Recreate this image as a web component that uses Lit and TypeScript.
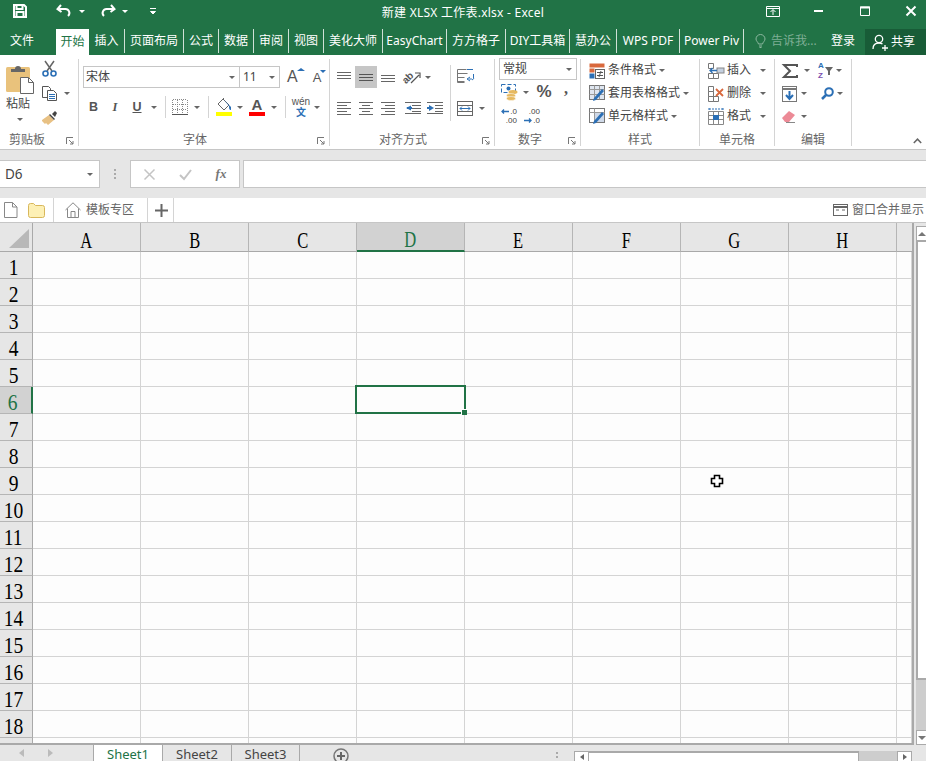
import { LitElement, html, svg, css } from "lit";
import { customElement } from "lit/decorators.js";

const i = (w: number, h: number, body: any) => html`<svg class="ic" width=${w} height=${h} viewBox="0 0 ${w} ${h}">${body}</svg>`;
const G = "#666";
const B = "#2b6fb5";
const car = html`<span class="car"></span>`;
const cell = (w: number, c: any = "") => html`<span class="cell" style="width:${w}px">${c}</span>`;
const launcher = html`<svg class="launch" width="8" height="8" viewBox="0 0 8 8"><path d="M.5 7V.5H7M3 3l4 4M7 4v3H4" fill="none" stroke="#777"/></svg>`;

const lines = (rows: [number, number][], y0: number, dy: number) =>
  rows.map((r, k) => `M${r[0]} ${y0 + k * dy + 0.5}H${r[1]}`).join("");

const save = i(14, 14, svg`<path d="M1 1h10l2 2v10H1z M3.500 1v4h6V1 M3.500 13V8h7v5" fill="none" stroke="#fff" stroke-width="2"/>`);
const undo = i(16, 14, svg`<path d="M5 1L1.500 5 5.500 8M2 5h7a4 4 0 0 1 3 7" fill="none" stroke="#fff" stroke-width="2"/>`);
const redo = i(16, 14, svg`<path d="M11 1l3.500 4L10.500 8M14 5H7a4 4 0 0 0-3 7" fill="none" stroke="#fff" stroke-width="2"/>`);
const custom = i(8, 8, svg`<path d="M1 1.500h6M1.500 4.500h5L4 7z" fill="#fff" stroke="#fff"/>`);

const paste = i(30, 30, svg`
  <rect x="0" y="3" width="24" height="25" rx="1.500" fill="#e9c27c"/>
  <path d="M5 8V5h4a3 3 0 0 1 6 0h4v3z" fill="#666"/>
  <path d="M14.500 13.500h8l5 5v11h-13z" fill="#fff" stroke="#666"/>
  <path d="M22.500 13.500v5h5" fill="none" stroke="#666"/>`);
const cut = i(16, 16, svg`
  <path d="M3 0l7 10M12 0L5 10" stroke="#666" stroke-width="1.500" fill="none"/>
  <circle cx="3.500" cy="12.500" r="2.500" fill="none" stroke="${B}" stroke-width="1.600"/>
  <circle cx="11.500" cy="12.500" r="2.500" fill="none" stroke="${B}" stroke-width="1.600"/>`);
const copy = i(16, 15, svg`
  <path d="M.5.500h6l2 2v9H.5z" fill="#fff" stroke="#555"/>
  <path d="M5.500 4.500h6l3 3v7h-9z" fill="#fff" stroke="#555"/>
  <path d="M7 8.500h6M7 10.500h6M7 12.500h6" stroke="${B}"/>`);
const brush = i(16, 15, svg`
  <path d="M0 10l7-5 5 5-6 5-2-2-1 1-3-3z" fill="#e8c184"/>
  <path d="M7 5l5 5 1-1-5-5z" fill="#444"/><path d="M10 4l3-3 2 2-2 4z" fill="#444"/>`);

const borderIc = i(16, 16, svg`<path d="M.5 1v14M5.500 1v14M10.500 1v14M15.500 1v14M1 .500h14M1 5.500h14M1 10.500h14" stroke="#888" stroke-dasharray="1 1" fill="none"/><path d="M0 15.500h16" stroke="#555"/>`);
const fillIc = html`<span class="stack">${i(16, 13, svg`
  <path d="M2 6l5-5 6 6-5 5z" fill="#fff" stroke="#666"/><path d="M5 3l3-3" stroke="#666"/>
  <path d="M7 1l6 6 2 2v3c-2 0-2-2-2-4z" fill="${B}"/>`)}<i class="swatch yellow"></i></span>`;
const colorIc = html`<span class="stack"><b class="acolor">A</b><i class="swatch red"></i></span>`;
const wen = html`<span class="wen"><span>wén</span><b>文</b></span>`;

const alignT = i(16, 12, svg`<path d="${lines([[0, 14], [0, 14], [0, 14]], 1, 3)}" stroke="${G}"/>`);
const alignM = i(16, 12, svg`<path d="${lines([[1, 15], [1, 15], [1, 15]], 3, 3)}" stroke="#555"/>`);
const alignB = i(16, 12, svg`<path d="${lines([[1, 15], [1, 15], [1, 15]], 4, 3)}" stroke="${G}"/>`);
const orient = i(20, 18, svg`
  <text x="0" y="13" transform="rotate(-45 6 10)" class="tiny">ab</text>
  <path d="M9 15L17 7M13 5h5v5" fill="none" stroke="#555" stroke-width="1.200"/>`);
const wrap = i(18, 16, svg`
  <path d="M.5.500h9M.5 4.500h10M.5 8.500h7M.5 12.500h7" stroke="#777"/><path d="M.5 .5v13h7" fill="none" stroke="#777"/>
  <path d="M10 .5h6M16.500 5v4a1 1 0 0 1-2 1h-3M13 8l-3 2 3 2" fill="none" stroke="${B}"/>`);
const hl = (a: [number, number][]) => i(15, 13, svg`<path d="${lines(a, 1, 3)}" stroke="${G}"/>`);
const left = hl([[0, 14], [0, 10], [0, 14], [0, 10], [0, 14]]);
const center = hl([[0, 14], [3, 11], [0, 14], [3, 11], [0, 14]]);
const right = hl([[0, 14], [4, 14], [0, 14], [4, 14], [0, 14]]);
const indentL = i(17, 13, svg`<path d="M0 1.500h16M7 4.500h9M7 7.500h9M7 10.500h9M0 12.500h16" stroke="${G}"/><path d="M6 4.500v5L1 7z" fill="${B}"/><path d="M2 7h5" stroke="${B}" stroke-width="2"/>`);
const indentR = i(17, 13, svg`<path d="M0 1.500h16M8 4.500h8M8 7.500h8M8 10.500h8M0 12.500h16" stroke="${G}"/><path d="M2 4v6l5-3z" fill="${B}"/><path d="M0 7h4" stroke="${B}" stroke-width="2"/>`);
const merge = i(16, 16, svg`<rect x=".5" y=".5" width="15" height="14" fill="#fff" stroke="#666"/><path d="M.5 4.500h15M.5 10.500h15" stroke="#666"/><path d="M3 7.500h10M5 5.500l-2 2 2 2M11 5.500l2 2-2 2" fill="none" stroke="${B}"/>`);
const acct = i(18, 17, svg`
  <rect x=".5" y=".5" width="14" height="8" fill="#fff" stroke="${B}" stroke-dasharray="4 2"/>
  <circle cx="7.500" cy="4.500" r="2" fill="${B}"/>
  <ellipse cx="12" cy="8" rx="4.500" ry="2" fill="#e6b961"/><ellipse cx="10" cy="11.500" rx="4.500" ry="2" fill="#e6b961" stroke="#fff" stroke-width=".5"/><ellipse cx="10" cy="14.500" rx="4.500" ry="2" fill="#e6b961" stroke="#fff" stroke-width=".5"/>`);
const decArrowL = i(8, 5, svg`<path d="M8 2.500H1M3 .5L1 2.500l2 2" fill="none" stroke="${B}" stroke-width="1.300"/>`);
const decArrowR = i(8, 5, svg`<path d="M0 2.500h7M5 .5l2 2-2 2" fill="none" stroke="${B}" stroke-width="1.300"/>`);
const decIn = html`<span class="dec"><span class="decr">${decArrowL}<span>.0</span></span><span>.00</span></span>`;
const decOut = html`<span class="dec"><span>.00</span><span class="decr">${decArrowR}<span>.0</span></span></span>`;

const condIc = i(16, 16, svg`<path d="M.5.500h15v4H.5z" fill="#d9683c"/><path d="M.5 5.500h5v4H.5z" fill="#d9683c"/><path d="M.5 10.500h5v5H.5z" fill="${B}"/><rect x="6.500" y="6.500" width="9" height="9" fill="#fff" stroke="#666"/><path d="M8 9.500h6M8 12.500h6M12 8l-2 6" stroke="#555" fill="none"/>`);
const tableIc = i(16, 17, svg`<rect x=".5" y=".5" width="15" height="14" fill="#dfe6f0" stroke="#777"/><path d="M.5 4.500h15M.5 9.500h15M5.500.5v14M10.500.5v14" stroke="#999"/><path d="M4 16l3-1 8-9-2-2-8 9z" fill="${B}"/>`);
const cellStyleIc = i(16, 17, svg`<rect x=".5" y=".5" width="15" height="14" fill="#fff" stroke="#777"/><rect x="5" y="5" width="10" height="9" fill="#cfd9e8"/><path d="M.5 4.500h15M5.500.5v14" stroke="#999"/><path d="M4 16l3-1 8-9-2-2-8 9z" fill="${B}"/>`);
const insIc = i(16, 16, svg`<path d="M.5.500h5v5h-5zM.5 10.500h5v5h-5zM5.500 10.500h5v5h-5z" fill="#fff" stroke="#777"/><rect x="9" y="5" width="7" height="5" fill="#c4d0e0" stroke="#888"/><path d="M9 7.500H2M4.500 5L2 7.500 4.500 10" fill="none" stroke="${B}" stroke-width="1.300"/>`);
const delIc = i(16, 16, svg`<path d="M.5.500h5v5h-5zM.5 10.500h5v5h-5zM5.500 10.500h5v5h-5zM.5 5.500h5v5h-5z" fill="#fff" stroke="#777"/><path d="M8 3l7 7M15 3l-7 7" stroke="#d9683c" stroke-width="1.800"/>`);
const fmtIc = i(16, 17, svg`<path d="M.5 3.500h15v13H.5zM.5 7.500h15M.5 11.500h15M5.500 3.500v13M10.500 3.500v13" fill="#fff" stroke="#888"/><rect x="5" y="7" width="6" height="5" fill="${B}"/><path d="M1 1h14M1 0v2M15 0v2" stroke="${B}" stroke-dasharray="2 1"/>`);
const sigma = i(16, 14, svg`<path d="M15 3V1H2l6 6-6 6h13v-2" fill="none" stroke="#555" stroke-width="2"/>`);
const fillDown = i(15, 16, svg`<rect x=".5" y=".5" width="14" height="15" fill="#fff" stroke="#777"/><path d="M.5 3h14" stroke="#777" stroke-width="2"/><path d="M7.500 5v8M4 9l3.500 4L11 9" fill="none" stroke="${B}" stroke-width="2"/>`);
const funnel = i(9, 9, svg`<path d="M0 1h8L5 5v4H3V5z" fill="#666"/>`);
const sortIc = html`<span class="sort"><span class="az"><b>A</b><b class="z">Z</b></span>${funnel}</span>`;
const find = i(13, 13, svg`<circle cx="8" cy="5" r="3.800" fill="#fff" stroke="${B}" stroke-width="2"/><path d="M5 8l-4 4" stroke="${B}" stroke-width="2.500"/>`);
const eraser = i(14, 13, svg`<path d="M0 8l7-7 6 4-6 7H3z" fill="#ec8a96"/><path d="M4 12.500h9" stroke="#888"/>`);

const docIc = i(14, 16, svg`<path d="M.5.500h8l4.500 4.500v10.500H.5z M8.500.500v4.500H13" fill="#fff" stroke="#888"/>`);
const folderIc = i(17, 15, svg`<path d="M.5 2.500a2 2 0 0 1 2-2h3l2 2h7a2 2 0 0 1 2 2v8a2 2 0 0 1-2 2h-12a2 2 0 0 1-2-2z" fill="#fdf0b5" stroke="#d8b75b"/>`);
const homeIc = i(16, 16, svg`<path d="M.5 8L8 .8 15.500 8M2.500 6.500v9h11v-9M6 15.500v-6h4v6" fill="none" stroke="#888"/>`);
const plusIc = i(13, 13, svg`<path d="M6.500 0v13M0 6.500h13" stroke="#666" stroke-width="2"/>`);
const winIc = i(15, 12, svg`<rect x=".5" y=".5" width="14" height="11" fill="none" stroke="#666"/><path d="M.5 3h14" stroke="#666" stroke-width="2"/><path d="M3 6h3M9 6h3" stroke="#666" stroke-width="1"/>`);

const bulb = i(11, 14, svg`<path d="M3.500 10C3 8 1 7 1 5a4.500 4.500 0 0 1 9 0c0 2-2 3-2.500 5zM4 12h3M4.500 13.500h2" fill="none" stroke="#8db8a0"/>`);
const person = i(17, 17, svg`<circle cx="7" cy="5" r="3.700" fill="none" stroke="#fff" stroke-width="1.300"/><path d="M1 15c0-4 2.500-6 6-6 1.500 0 2.500.3 3.500 1M13 11v6M10 14h6" fill="none" stroke="#fff" stroke-width="1.300"/>`);

const tabs: [string, number][] = [
  ["插入", 36], ["页面布局", 59], ["公式", 35], ["数据", 35], ["审阅", 35], ["视图", 35], ["美化大师", 59],
  ["EasyChart", 64], ["方方格子", 59], ["DIY工具箱", 64], ["慧办公", 47], ["WPS PDF", 63], ["Power Piv", 64],
];
const COLS = ["A", "B", "C", "D", "E", "F", "G", "H"];
const ROWS = Array.from({ length: 18 }, (_, k) => k + 1);

@customElement("app-root")
export class AppRoot extends LitElement {
  static styles = css`
    :host { display: block; width: 926px; height: 761px; overflow: hidden; background: #e6e6e6; color: #444;
      font: 12px/1.2 "Noto Sans", "Noto Sans CJK SC", sans-serif; }
    .ic { display: block; flex: none; overflow: visible; }
    .tiny { font: 10px "Liberation Sans", sans-serif; fill: #555; font-weight: bold; }
    .cell { display: flex; align-items: center; justify-content: center; flex: none; height: 100%; }
    .car { display: block; width: 0; height: 0; border: 3px solid transparent; border-top: 3px solid #666; border-bottom: 0; flex: none; }

    .title { height: 27px; background: #217346; color: #fff; display: grid; grid-template-columns: 1fr auto 1fr; align-items: center; }
    .qat { display: flex; align-items: center; height: 22px; align-self: start; }
    .qat .car { border-top-color: #fff; }
    .name { font-size: 12px; letter-spacing: .25px; }
    .win { display: flex; justify-content: flex-end; align-items: center; height: 22px; align-self: start; }

    .tabs { height: 28px; background: #217346; color: #fff; display: flex; align-items: center; }
    .tab { height: 24px; display: flex; align-items: center; justify-content: center; border-right: 1px solid #cfe0d6; box-sizing: border-box; white-space: nowrap; overflow: hidden; flex: none; padding: 0 4px; }
    .tab.file { width: 56px; border: 0; justify-content: flex-start; padding: 0 0 0 10px; }
    .tab.on { width: 33px; height: 26px; align-self: flex-end; background: #fff; color: #217346; border: 0; padding: 0; }
    .tab span { display: block; }
    .tell { display: flex; align-items: center; gap: 5px; margin-left: 11px; width: 76px; color: #7fae95; flex: none; }
    .tab.login { width: 34px; flex: none; border: 0; padding: 0; justify-content: flex-start; }
    .share { width: 61px; height: 26px; align-self: flex-end; background: #185c37; display: flex; align-items: center; gap: 2px; padding-left: 7px; box-sizing: border-box; flex: none; margin-top: -2px; }

    .ribbon { background: #fff; border-bottom: 1px solid #c6c6c6; display: flex; padding-top: 4px; box-sizing: border-box; height: 95px; padding-bottom: 3px; }
    .grp { height: 87px; border-right: 1px solid #d4d4d4; box-sizing: border-box; display: flex; flex-direction: column; flex: none; position: relative; color: #444; }
    .body { flex: 1; display: flex; min-height: 0; }
    .label { height: 15px; text-align: center; color: #666; line-height: 18px; }
    .launch { position: absolute; right: 4px; bottom: 1px; }

    .g1 { width: 79px; }
    .g1 .label { padding-right: 24px; }
    .pastecol { width: 42px; display: flex; flex-direction: column; align-items: center; padding-top: 5px; box-sizing: border-box; }
    .pastecol .big { align-self: flex-start; margin-left: 6px; }
    .pastecol .t { margin-top: 3px; font-size: 12px; margin-right: 6px; }
    .pastecol .car { margin: 7px 3px 0 0; }
    .clipcol { display: flex; flex-direction: column; padding-top: 2px; gap: 8px; }
    .clipcol .r { display: flex; align-items: center; gap: 6px; height: 16px; }

    .g2 { width: 251px; }
    .g2 .label { padding-right: 18px; }
    .col { display: flex; flex-direction: column; }
    .fontcol { padding: 7px 0 0 4px; gap: 8px; }
    .r1 { height: 22px; display: flex; align-items: center; }
    .r2 { height: 22px; display: flex; align-items: center; }
    .combo { border: 1px solid #c6c6c6; height: 22px; box-sizing: border-box; display: flex; align-items: center; justify-content: space-between; padding: 0 4px 0 2px; font-size: 12px; color: #444; flex: none; }
    .combo.font { width: 157px; }
    .combo.size { width: 40px; margin-left: 0; padding-left: 3px; border-left: 0; }
    .big-a { font: 16px "Liberation Sans", sans-serif; color: #555; position: relative; }
    .small-a { font: 13px "Liberation Sans", sans-serif; color: #555; position: relative; }
    .tri { display: inline-block; width: 0; height: 0; border: 3px solid transparent; vertical-align: top; margin-left: -1px; }
    .tri.up { border-bottom: 3px solid #2b6fb5; border-top: 0; }
    .tri.down { border-top: 3px solid #2b6fb5; border-bottom: 0; }
    .sz { display: flex; align-items: flex-start; }
    .bt { font: bold 12.5px "Liberation Sans", sans-serif; color: #555; }
    .bi { font: italic bold 12.5px "Liberation Serif", serif; color: #555; }
    .bu { font: bold 12.5px "Liberation Sans", sans-serif; text-decoration: underline; color: #555; }
    .vsep { width: 1px; height: 22px; background: #d4d4d4; flex: none; display: block; }
    .stack { display: flex; flex-direction: column; align-items: center; }
    .swatch { display: block; width: 16px; height: 4px; margin-top: 1px; }
    .yellow { background: #ffff00; }
    .red { background: #ff0000; }
    .acolor { font: bold 15px/13px "Liberation Sans", sans-serif; color: #555; }
    .wen { display: flex; flex-direction: column; align-items: center; font: 10px/10px "Liberation Sans", sans-serif; color: #555; }
    .wen b { font: bold 10px/10px "Noto Sans CJK SC", sans-serif; color: #2b6fb5; }

    .g3 { width: 165px; padding-left: 4px; }
    .g3 .label { padding-right: 22px; }
    .aligncol { padding-top: 7px; gap: 8px; width: 116px; flex: none; }
    .boxon { background: #c6c6c6; width: 22px; height: 22px; }
    .alignsep { width: 1px; height: 56px; background: #d4d4d4; margin: 6px 6px 0 0; flex: none; }
    .wrapcol { padding-top: 9px; gap: 15px; }
    .wrapcol .r { display: flex; align-items: center; height: 17px; }

    .g4 { width: 86px; padding-left: 4px; }
    .g4 .label { padding-right: 19px; }
    .numcol { gap: 0; }
    .combo.num { width: 78px; padding-left: 3px; margin-top: -1px; padding-top: 1px; }
    .r3 { height: 24px; display: flex; align-items: center; }
    .pct { font: bold 17px "Liberation Sans", sans-serif; color: #555; }
    .comma { font: bold 16px "Liberation Serif", serif; color: #555; margin-top: -6px; }
    .dec { display: flex; flex-direction: column; font: 8px/9.5px "Liberation Sans", sans-serif; color: #444; align-items: flex-end; }
    .decr { display: flex; align-items: center; gap: 1px; }

    .g5 { width: 119px; padding-left: 8px; }
    .g6 { width: 75px; padding-left: 8px; }
    .g7 { width: 77px; padding-left: 7px; }
    .g5 .label, .g6 .label { margin-left: -8px; }
    .g7 .label { margin-left: -7px; }
    .rows { display: flex; flex-direction: column; width: 100%; }
    .item { height: 23px; display: flex; align-items: center; gap: 3px; white-space: nowrap; flex: none; }
    .g6 .item .lab { width: 30px; flex: none; }
    .edit { display: flex; align-items: center; height: 23px; }
    .sort { display: flex; align-items: center; gap: 1px; }
    .az { display: flex; flex-direction: column; font: bold 8px/9.3px "Liberation Sans", sans-serif; color: #2b6fb5; }
    .az .z { color: #7a4fb0; }
    .collapse { margin: 79px 0 0 61px; }

    .fbar { height: 28px; margin-top: 10px; display: flex; align-items: stretch; }
    .namebox { width: 100px; background: #fff; border: 1px solid #c6c6c6; border-left: 0; box-sizing: border-box; display: flex; align-items: center; justify-content: space-between; padding: 0 6px 0 5px; font: 13.5px "Noto Sans", sans-serif; color: #444; }
    .dots { width: 30px; display: flex; flex-direction: column; align-items: center; justify-content: center; gap: 2px; flex: none; }
    .dots i { display: block; width: 2px; height: 2px; background: #aaa; }
    .fnbox { width: 110px; background: #fff; border: 1px solid #c6c6c6; box-sizing: border-box; display: flex; align-items: center; color: #aaa; flex: none; }
    .fx { font: italic bold 13px "Liberation Serif", serif; color: #777; }
    .input { flex: 1; margin-left: 3px; background: #fff; border: 1px solid #c6c6c6; border-right: 0; }

    .tbar { height: 25px; margin-top: 10px; background: #fff; border-bottom: 1px solid #c6c6c6; box-sizing: border-box; display: flex; align-items: center; color: #666; }
    .tbar .tcell { height: 24px; display: flex; align-items: center; border-right: 1px solid #d4d4d4; box-sizing: border-box; flex: none; }
    .tbar .tc1 { width: 54px; padding-left: 4px; gap: 10px; }
    .tbar .tc2 { width: 94px; padding-left: 11px; gap: 5px; }
    .tbar .tc3 { width: 26px; padding-left: 7px; }
    .tright { margin-left: auto; display: flex; align-items: center; gap: 4px; width: 93px; flex: none; white-space: nowrap; }

    .sheet { display: flex; height: 522px; }
    .grid { position: relative; width: 914px; flex: none; display: grid; grid-template-columns: 33px repeat(8, 108px) 15px; grid-template-rows: 29px repeat(18, 27px) 6px; border-right: 2px solid #a9a9a9; border-bottom: 2px solid #a9a9a9; box-sizing: border-box; background: #fdfdfd; overflow: hidden; height: 522px; }
    .c { border-right: 1px solid #d4d4d4; border-bottom: 1px solid #d4d4d4; box-sizing: border-box; }
    .c.ch { background: #e6e6e6; border-right: 1px solid #b5b5b5; border-bottom: 1px solid #a9a9a9; display: flex; align-items: center; justify-content: center; color: #000; font: 23px/1 "Liberation Serif", serif; padding-top: 6px; }
    .c.ch.end { border-right: 0; }
    .c.ch span { display: block; transform: scaleX(.72); }
    .c.ch.on { background: #d2d2d2; color: #217346; border-bottom: 2px solid #217346; }
    .c.rh { background: #e6e6e6; border-right: 1px solid #a9a9a9; border-bottom: 1px solid #b5b5b5; display: flex; align-items: center; justify-content: center; color: #000; font: 23px/1 "Liberation Serif", serif; padding: 4px 5px 0 0; }
    .c.rh span { display: block; transform: scaleX(.85); }
    .c.rh.on { background: #d2d2d2; color: #217346; border-right: 2px solid #217346; }
    .c.corner { background: #e6e6e6; border-right: 1px solid #a9a9a9; border-bottom: 1px solid #a9a9a9; position: relative; display: flex; align-items: flex-end; justify-content: flex-end; padding: 0 3px 3px 0; }
    .sel { position: absolute; left: 355px; top: 162px; width: 111px; height: 29px; box-sizing: border-box; border: 2px solid #217346; }
    .handle { position: absolute; right: -3px; bottom: -3px; width: 5px; height: 5px; background: #217346; border-left: 1px solid #fff; border-top: 1px solid #fff; }
    .cursor { position: absolute; left: 710px; top: 251px; }

    .vs { flex: 1; padding: 3px 0 0 2px; display: flex; flex-direction: column; }
    .vbtn { height: 15px; background: #fff; border: 1px solid #a9a9a9; border-right: 0; box-sizing: border-box; display: flex; align-items: center; justify-content: center; flex: none; }
    .vthumb { height: 440px; background: #fff; border: 2px solid #a9a9a9; border-right: 0; box-sizing: border-box; flex: none; margin-top: -1px; }
    .vtrack { flex: 1; background: #cdcdcd; }
    .up { width: 0; height: 0; border: 4px solid transparent; border-bottom: 4px solid #777; border-top: 0; }
    .dn { width: 0; height: 0; border: 4px solid transparent; border-top: 4px solid #777; border-bottom: 0; }

    .bottom { height: 16px; display: flex; color: #444; font: 13px/18px "Noto Sans", sans-serif; align-items: flex-start; white-space: nowrap; }
    .nav { width: 93px; display: flex; align-items: center; height: 16px; flex: none; }
    .navl { width: 0; height: 0; border: 4px solid transparent; border-right: 5px solid #bbb; border-left: 0; margin-left: 19px; }
    .navr { width: 0; height: 0; border: 4px solid transparent; border-left: 5px solid #bbb; border-right: 0; margin-left: 24px; }
    .stab { flex: none; height: 18px; text-align: center; box-sizing: border-box; }
    .stab.on { width: 70px; background: #fff; color: #217346; border-left: 1px solid #a9a9a9; border-right: 1px solid #a9a9a9; margin-top: -2px; padding-top: 2px; }
    .stab.s2 { width: 69px; border-right: 1px solid #a9a9a9; height: 16px; }
    .stab.s3 { width: 68px; border-right: 1px solid #a9a9a9; height: 16px; }
    .addsheet { margin: 3px 0 0 33px; flex: none; }
    .bdots { width: 2px; margin: 7px 0 0 207px; display: flex; flex-direction: column; gap: 2px; flex: none; }
    .bdots i { display: block; width: 2px; height: 2px; background: #aaa; }
    .hs { margin-left: 16px; margin-top: 6px; width: 338px; height: 10px; flex: none; display: flex; }
    .hbtn { width: 15px; background: #fff; border: 1px solid #a9a9a9; border-bottom: 0; box-sizing: border-box; flex: none; display: flex; align-items: center; justify-content: center; }
    .hthumb { width: 270px; background: #fff; border: 2px solid #a9a9a9; border-bottom: 0; border-left: 0; border-right-width: 1px; box-sizing: border-box; flex: none; }
    .htrack { flex: 1; background: #cdcdcd; }
    .hl { width: 0; height: 0; border: 3px solid transparent; border-right: 4px solid #666; border-left: 0; }
    .hr { width: 0; height: 0; border: 3px solid transparent; border-left: 4px solid #666; border-right: 0; }
  `;

  render() {
    return html`
      <div class="title">
        <div class="qat">
          ${cell(13)}${save}${cell(29)}${undo}${cell(20, car)}${cell(8)}${redo}${cell(18, car)}${cell(15)}${custom}
        </div>
        <div class="name">新建 XLSX 工作表.xlsx - Excel</div>
        <div class="win">
          ${i(14, 11, svg`<path d="M.5.500h13v10H.5z M.5 2.500h13M7 9V4M4.500 6L7 3.500 9.500 6" fill="none" stroke="#fff"/>`)}
          ${cell(34)}
          ${i(10, 2, svg`<path d="M0 1h9" stroke="#fff" stroke-width="2"/>`)}
          ${cell(36)}
          ${i(10, 10, svg`<path d="M.5 1h9v8.500H.5z" fill="none" stroke="#fff"/><path d="M0 1.500h10" stroke="#fff" stroke-width="2"/>`)}
          ${cell(36)}
          ${i(10, 10, svg`<path d="M.5.500l9 9M9.500.500l-9 9" stroke="#fff" stroke-width="2"/>`)}
          ${cell(10)}
        </div>
      </div>

      <div class="tabs">
        <div class="tab file"><span>文件</span></div>
        <div class="tab on"><span>开始</span></div>
        ${tabs.map(([t, w]) => html`<div class="tab" style="width:${w}px"><span>${t}</span></div>`)}
        <div class="tell">${bulb}<span>告诉我...</span></div>
        <div class="tab login">登录</div>
        <div class="share">${person}<span>共享</span></div>
      </div>

      <div class="ribbon">
        <div class="grp g1">
          <div class="body">
            <div class="pastecol"><span class="big">${paste}</span><span class="t">粘贴</span>${car}</div>
            <div class="clipcol">
              <span class="r">${cut}</span>
              <span class="r">${copy}${car}</span>
              <span class="r">${brush}</span>
            </div>
          </div>
          <div class="label">剪贴板</div>${launcher}
        </div>

        <div class="grp g2">
          <div class="body">
            <div class="col fontcol">
              <div class="r1">
                <div class="combo font"><span>宋体</span>${car}</div>
                <div class="combo size"><span>11</span>${car}</div>
                ${cell(7)}
                <span class="sz big-a"><span>A</span><span class="tri up"></span></span>
                ${cell(8)}
                <span class="sz small-a"><span>A</span><span class="tri down"></span></span>
              </div>
              <div class="r2">
                ${cell(21, html`<span class="bt">B</span>`)}${cell(22, html`<span class="bi">I</span>`)}${cell(22, html`<span class="bu">U</span>`)}${cell(12, car)}
                ${cell(10, html`<span class="vsep"></span>`)}${cell(20, borderIc)}${cell(14, car)}
                ${cell(8, html`<span class="vsep"></span>`)}${cell(24, fillIc)}${cell(8, car)}
                ${cell(26, colorIc)}${cell(8, car)}
                ${cell(14, html`<span class="vsep"></span>`)}${cell(18, wen)}${cell(14, car)}
              </div>
            </div>
          </div>
          <div class="label">字体</div>${launcher}
        </div>

        <div class="grp g3">
          <div class="body">
            <div class="col aligncol">
              <div class="r1">
                ${cell(21, alignT)}<span class="cell boxon">${alignM}</span>${cell(22, alignB)}${cell(26, orient)}${cell(6, car)}
              </div>
              <div class="r2">
                ${cell(21, left)}${cell(22, center)}${cell(22, right)}${cell(28, indentL)}${cell(16, indentR)}
              </div>
            </div>
            <span class="alignsep"></span>
            <div class="col wrapcol">
              <span class="r">${wrap}</span>
              <span class="r">${merge}${cell(2)}${cell(14, car)}</span>
            </div>
          </div>
          <div class="label">对齐方式</div>${launcher}
        </div>

        <div class="grp g4">
          <div class="body">
            <div class="col numcol">
              <div class="combo num"><span>常规</span>${car}</div>
              <div class="r3">
                ${cell(22, acct)}${cell(10, car)}${cell(26, html`<span class="pct">%</span>`)}${cell(18, html`<span class="comma">,</span>`)}
              </div>
              <div class="r3">${cell(20, decIn)}${cell(26, decOut)}</div>
            </div>
          </div>
          <div class="label">数字</div>${launcher}
        </div>

        <div class="grp g5">
          <div class="body">
            <div class="rows">
              <div class="item">${condIc}<span>条件格式</span>${car}</div>
              <div class="item">${tableIc}<span>套用表格格式</span>${car}</div>
              <div class="item">${cellStyleIc}<span>单元格样式</span>${car}</div>
            </div>
          </div>
          <div class="label">样式</div>
        </div>

        <div class="grp g6">
          <div class="body">
            <div class="rows">
              <div class="item">${insIc}<span class="lab">插入</span>${car}</div>
              <div class="item">${delIc}<span class="lab">删除</span>${car}</div>
              <div class="item">${fmtIc}<span class="lab">格式</span>${car}</div>
            </div>
          </div>
          <div class="label">单元格</div>
        </div>

        <div class="grp g7">
          <div class="body">
            <div class="rows">
              <div class="edit">${sigma}${cell(17, car)}${cell(4)}${cell(14, sortIc)}${cell(3)}${car}</div>
              <div class="edit">${fillDown}${cell(14, car)}${cell(9)}${cell(14, find)}${cell(3)}${car}</div>
              <div class="edit">${eraser}${cell(15, car)}</div>
            </div>
          </div>
          <div class="label">编辑</div>
        </div>

        <div class="collapse">${i(9, 6, svg`<path d="M.8 5L4.500 1.200 8.200 5" fill="none" stroke="#666" stroke-width="1.500"/>`)}</div>
      </div>

      <div class="fbar">
        <div class="namebox"><span>D6</span>${car}</div>
        <div class="dots"><i></i><i></i><i></i></div>
        <div class="fnbox">
          ${cell(36, i(11, 11, svg`<path d="M.5.500l10 10M10.500.500l-10 10" stroke="#c4c4c4" stroke-width="1.500"/>`))}
          ${cell(36, i(13, 11, svg`<path d="M1 6l4 4 7-9" fill="none" stroke="#c4c4c4" stroke-width="2"/>`))}
          ${cell(36, html`<span class="fx">fx</span>`)}
        </div>
        <div class="input"></div>
      </div>

      <div class="tbar">
        <div class="tcell tc1">${docIc}${folderIc}</div>
        <div class="tcell tc2">${homeIc}<span>模板专区</span></div>
        <div class="tcell tc3">${plusIc}</div>
        <div class="tright">${winIc}<span>窗口合并显示</span></div>
      </div>

      <div class="sheet">
        <div class="grid">
          <div class="c corner">${i(20, 19, svg`<path d="M20 0v19H0z" fill="#b8b8b8"/>`)}</div>
          ${COLS.map((c) => html`<div class="c ch ${c === "D" ? "on" : ""}"><span>${c}</span></div>`)}
          <div class="c ch end"></div>
          ${ROWS.map((r) => html`
            <div class="c rh ${r === 6 ? "on" : ""}"><span>${r}</span></div>
            ${COLS.map(() => html`<div class="c"></div>`)}
            <div class="c"></div>`)}
          <div class="c rh"></div>
          ${COLS.map(() => html`<div class="c"></div>`)}
          <div class="c"></div>
          <div class="sel"><span class="handle"></span></div>
          <svg class="cursor" width="14" height="14" viewBox="0 0 14 14"><path d="M4.500 1.500h5v3h3v5h-3v3h-5v-3h-3v-5h3z" fill="#fff" stroke="#000" stroke-width="1.600"/></svg>
        </div>
        <div class="vs">
          <div class="vbtn"><span class="up"></span></div>
          <div class="vthumb"></div>
          <div class="vtrack"></div>
          <div class="vbtn"><span class="dn"></span></div>
        </div>
      </div>

      <div class="bottom">
        <div class="nav"><span class="navl"></span><span class="navr"></span></div>
        <div class="stab on">Sheet1</div>
        <div class="stab s2">Sheet2</div>
        <div class="stab s3">Sheet3</div>
        <div class="addsheet">${i(16, 16, svg`<circle cx="8" cy="8" r="7" fill="none" stroke="#777" stroke-width="1.500"/><path d="M8 4v8M4 8h8" stroke="#666" stroke-width="2"/>`)}</div>
        <div class="bdots"><i></i><i></i></div>
        <div class="hs">
          <div class="hbtn"><span class="hl"></span></div>
          <div class="hthumb"></div>
          <div class="htrack"></div>
          <div class="hbtn"><span class="hr"></span></div>
        </div>
      </div>
    `;
  }
}
